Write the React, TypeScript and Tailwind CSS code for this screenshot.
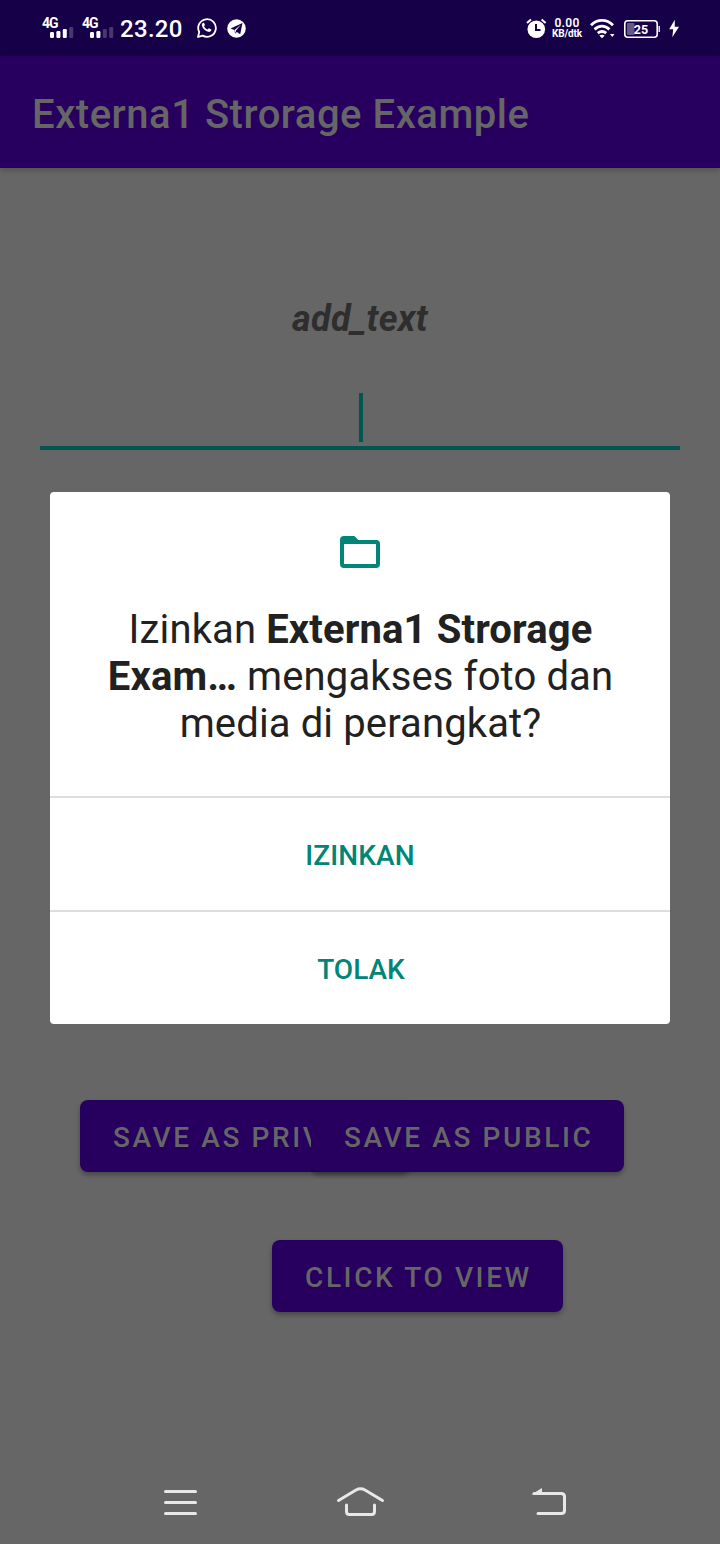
import type { ReactNode } from "react";

function Signal({ strength }: { strength: number }) {
  return (
    <div className="relative h-6 w-8">
      <span className="absolute left-0 -top-px text-[14px] leading-[14px] font-bold tracking-[-1px]">4G</span>
      <svg className="absolute left-2 top-[9px]" width="24" height="13" viewBox="0 0 24 13">
        {[6, 7, 9, 11].map((h, i) => (
          <rect key={i} x={i * 6.4} y={12 - h} width="4" height={h} rx="1.2" fill="#fff" fillOpacity={i < strength ? 1 : 0.22} />
        ))}
      </svg>
    </div>
  );
}

function StatusBar() {
  return (
    <header className="flex h-14 items-start bg-[#160048] pl-[42px] text-white">
      <div className="mt-[17px] flex gap-2">
        <Signal strength={3} />
        <Signal strength={2} />
      </div>
      <span className="ml-[6px] mt-[14px] w-[76px] text-2xl leading-[30px] font-medium tracking-[0.3px]">23.20</span>
      <svg className="mt-[17px]" width="21" height="22" viewBox="0 0 21 22" fill="none">
        <path d="M2 20l1.2-5A8.8 8.8 0 1 1 6.600 18.600Z" stroke="#fff" strokeWidth="1.8" strokeLinejoin="round" />
        <path d="M7.300 5.700c-1.500.6-1.800 2-1.200 3.500 1 2.700 3.300 4.800 6.100 5.600 1.500.4 2.900-.3 3.200-1.700l-.1-.7-2.400-1.200-1.400 1.300c-1.600-.6-2.700-1.700-3.500-3.200l1-1.300-1-2.300Z" fill="#fff" />
      </svg>
      <svg className="ml-[10px] mt-[19px]" width="20" height="20" viewBox="0 0 20 20">
        <circle cx="9.500" cy="9.500" r="9.300" fill="#fff" />
        <path d="M3.500 9.500L15.500 4l-2.300 11.300-3.300-2.300-1.800 1.800-.6-3.800Z" fill="#160048" />
        <path d="M7.600 11.100L14 5.600l-5 6-.7 2.700Z" fill="#fff" />
      </svg>
      <div className="ml-auto mr-[40px] mt-[17px] flex items-start">
        <svg className="mt-px" width="21" height="22" viewBox="0 0 21 22">
          <circle cx="10.300" cy="11.200" r="8.800" fill="#fff" />
          <path d="M1 5l4-3.500M19.600 5l-4-3.500" stroke="#fff" strokeWidth="2" />
          <path d="M10 6v6h4.500" stroke="#160048" strokeWidth="2" fill="none" />
        </svg>
        <div className="ml-[4px] w-[32px] text-center font-bold">
          <div className="text-[12px] leading-[12px] font-semibold tracking-[0.3px]">0.00</div>
          <div className="text-[10px] leading-[10px] tracking-[-0.1px]">KB/dtk</div>
        </div>
        <svg className="ml-[7px] mt-px" width="27" height="21" viewBox="0 0 27 21" fill="none">
          <path d="M1 7.200C7.300.7 16.700.7 23 7.200M4.500 11.400c4.700-4.300 10.300-4.300 15 0M7.800 15.200c2.700-2.200 5.700-2.200 8.400 0" stroke="#fff" strokeWidth="2.800" />
          <path d="M9.300 17.600q2.700-1.700 5.400 0L12 20.300ZM20 16h4.500l-2.250 3Z" fill="#fff" />
        </svg>
        <svg className="ml-[7px] mt-[2px]" width="37" height="20" viewBox="0 0 37 20">
          <rect x=".8" y="1.800" width="32.400" height="16.400" rx="3" stroke="#fff" strokeWidth="1.600" fill="none" />
          <rect x="3" y="4" width="7.500" height="12" rx="1" fill="#fff" fillOpacity=".35" />
          <path d="M35.200 7v6" stroke="#fff" strokeWidth="1.300" />
          <text x="17" y="15.300" textAnchor="middle" fill="#fff" className="text-[12.500px] font-bold">25</text>
        </svg>
        <svg className="ml-[7px] mt-[2px]" width="12" height="19" viewBox="0 0 12 19">
          <path d="M6.800.8L1.200 10.300h4L4.300 18.200 11 7.800H6.700Z" fill="#fff" />
        </svg>
      </div>
    </header>
  );
}

function ActionButton({ children, className }: { children: ReactNode; className: string }) {
  return (
    <button className={`h-[72px] shrink-0 rounded-lg bg-[#27005f] pt-[3px] pl-[33px] text-left text-[28px] font-medium tracking-[2.600px] whitespace-nowrap text-[#666] shadow-[0_3px_5px_rgba(0,0,0,0.3)] ${className}`}>
      {children}
    </button>
  );
}

function PermissionDialog() {
  return (
    <section role="dialog" className="absolute left-[50px] top-[492px] flex h-[532px] w-[620px] flex-col rounded bg-white text-center">
      <div className="flex h-[304px] flex-col items-center pt-9">
        <svg width="48" height="48" viewBox="0 0 24 24" fill="#008577">
          <path d="M9.170 4L11.170 6H20q2 0 2 2v10q0 2-2 2H4q-2 0-2-2V6q0-2 2-2ZM4 8v10h16V8Z" fillRule="evenodd" />
        </svg>
        <h2 className="mt-[30px] pl-px text-[40px] leading-[47px] font-[450] tracking-[0.130px] text-[#212121]">
          <span className="block">Izinkan <b>Externa1 Strorage</b></span>
          <span className="block"><b>Exam…</b> mengakses foto dan</span>
          <span className="block">media di perangkat?</span>
        </h2>
      </div>
      <button className="h-[114px] border-t-2 border-[#dedede] pt-1 text-[28px] font-medium tracking-[0.100px] text-[#008577]">IZINKAN</button>
      <button className="h-[114px] border-t-2 border-[#dedede] pt-1 pl-[2px] text-[28px] font-medium text-[#008577]">TOLAK</button>
    </section>
  );
}

function NavigationBar() {
  return (
    <nav className="flex h-[84px] items-center pl-[162px]">
      <svg width="36" height="32" viewBox="0 0 36 32" fill="none" stroke="#e8e8e8" strokeWidth="3" strokeLinecap="round">
        <path d="M3.500 5.500h30M3.500 16.500h30M3.500 27.500h30" />
      </svg>
      <svg className="ml-[138px]" width="50" height="34" viewBox="0 0 50 34" fill="none" stroke="#e8e8e8" strokeWidth="3" strokeLinecap="round">
        <path d="M2.500 15.500L20 5q4.500-2.500 9 0l17.500 10.500M10.500 20v6.500q0 3 3 3h22q3 0 3-3V20" />
      </svg>
      <svg className="ml-[144px]" width="38" height="32" viewBox="0 0 38 32" fill="none" stroke="#e8e8e8" strokeWidth="3">
        <path d="M4 7.500h27q3.500 0 3.500 3v14q0 3-3.500 3H8" strokeLinecap="round" />
        <path d="M1.500 8.500L12 2v6.500Z" fill="#e8e8e8" stroke="none" />
      </svg>
    </nav>
  );
}

export default function App() {
  return (
    <div className="relative flex h-[1544px] w-[720px] flex-col overflow-hidden bg-[#666] font-[Roboto,sans-serif]">
      <StatusBar />
      <div className="flex h-28 items-center bg-[#27005f] pl-8 pt-[6px] text-[40px] font-medium tracking-[0.530px] text-[#666] shadow-[0_2px_6px_rgba(0,0,0,0.22)]">
        Externa1 Strorage Example
      </div>
      <main className="flex flex-1 flex-col">
        <div className="mt-[127px] h-12 text-center text-[36px] leading-[48px] font-bold tracking-[0.250px] text-[#2e2e2e] italic">add_text</div>
        <div className="mx-10 mt-[50px] flex h-[57px] justify-center border-b-4 border-[#01574f] pl-[2px]">
          <div className="h-[49px] w-1 bg-[#01574f]" />
        </div>
        <div className="mt-[650px] flex pl-20">
          <div className="flex w-[231px]">
            <ActionButton className="w-[330px]">SAVE AS PRIVATE</ActionButton>
          </div>
          <ActionButton className="z-10 w-[313px] [clip-path:inset(0_-10px_-12px_0)]">SAVE AS PUBLIC</ActionButton>
        </div>
        <ActionButton className="mt-[68px] ml-[272px] w-[291px]">CLICK TO VIEW</ActionButton>
      </main>
      <NavigationBar />
      <PermissionDialog />
    </div>
  );
}
